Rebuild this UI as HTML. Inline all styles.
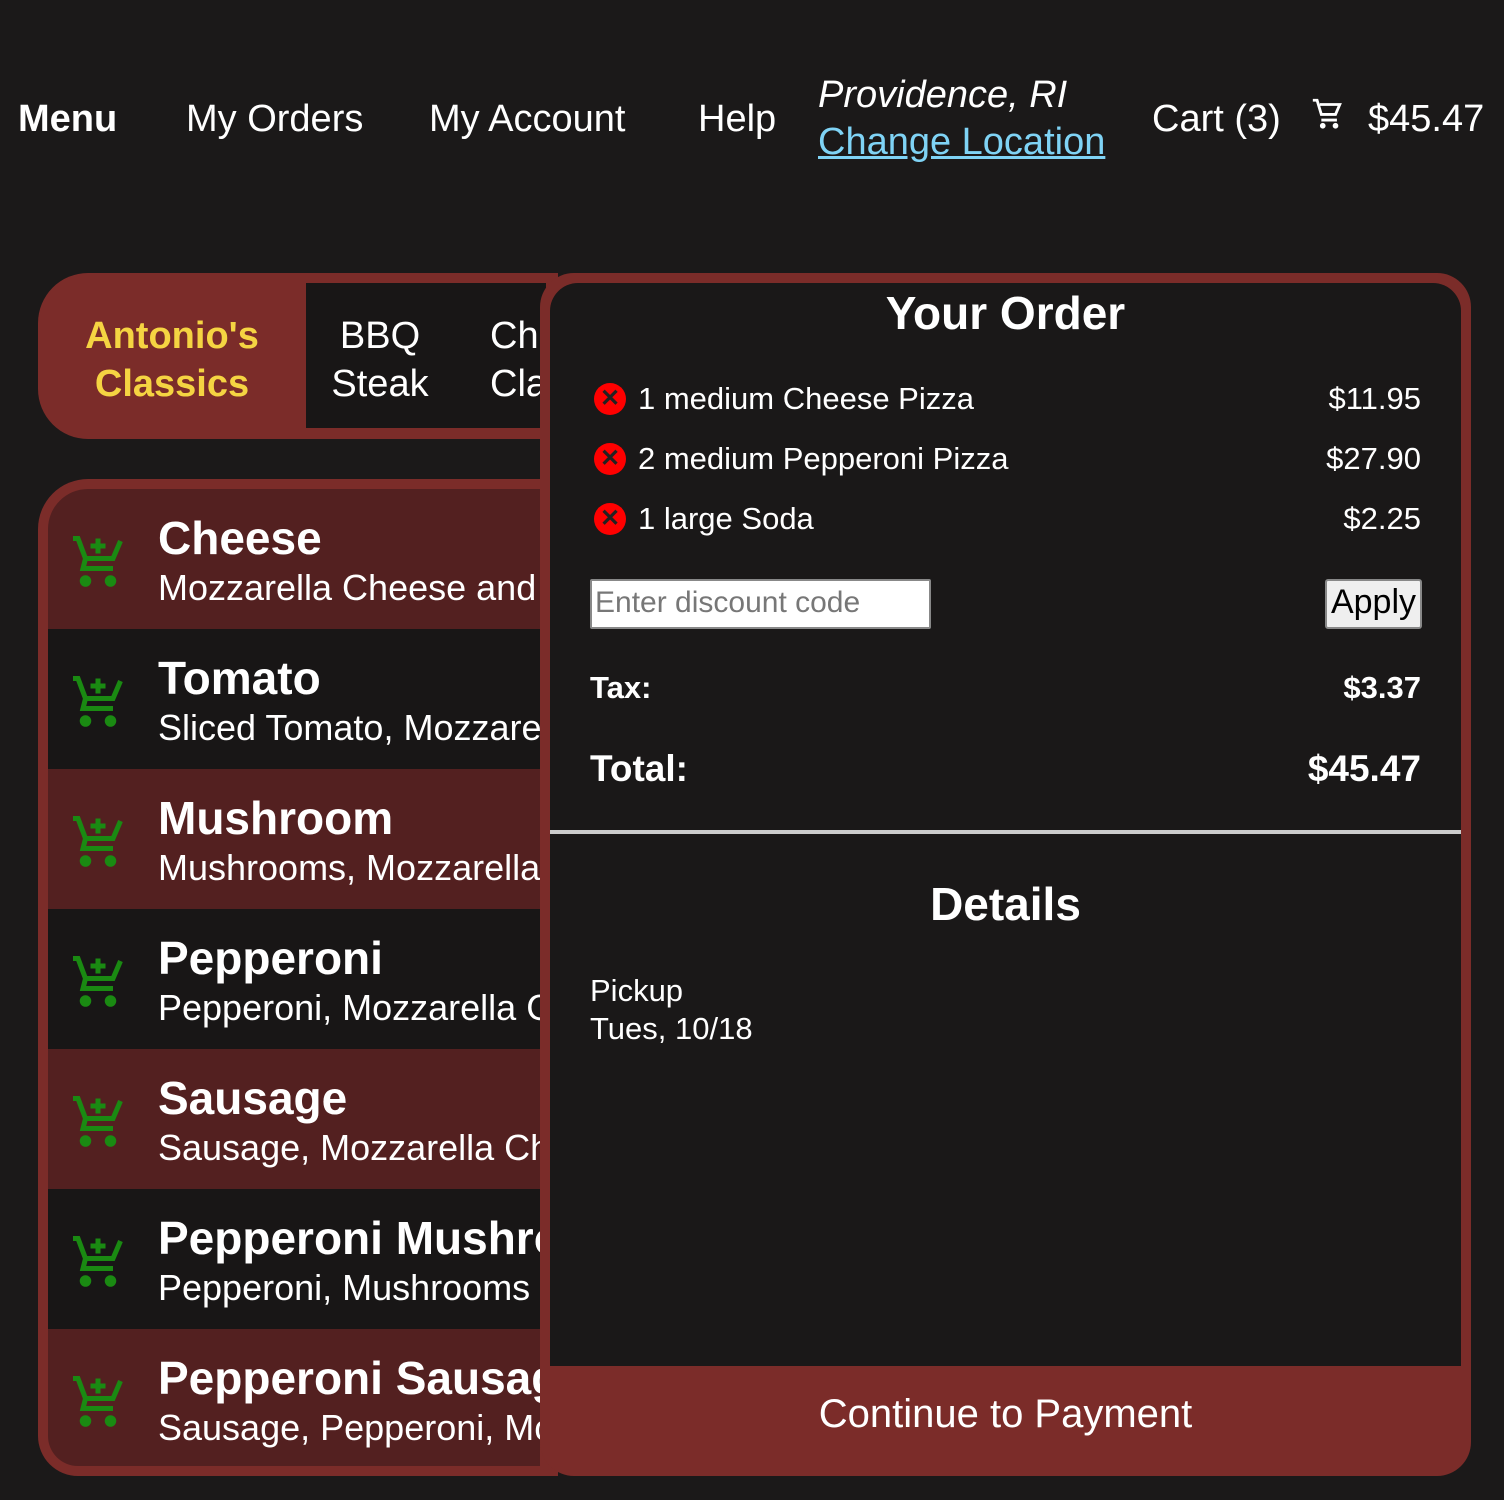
<!DOCTYPE html>
<html><head><meta charset="utf-8"><style>
*{margin:0;padding:0;box-sizing:border-box}
body{width:1504px;height:1500px;background:#1b1919;font-family:"Liberation Sans",sans-serif;color:#fff;position:relative;overflow:hidden}
.a{position:absolute;white-space:nowrap}
.nav{font-size:38px;top:98px}
.row{position:absolute;left:48px;width:492px;height:140px;overflow:hidden}
.row.r{background:#532020}
.row.d{background:#181616}
.row h3{position:absolute;left:110px;top:22px;font-size:46px;font-weight:bold;white-space:nowrap}
.row p{position:absolute;left:110px;top:78px;font-size:36px;white-space:nowrap}
.row svg{position:absolute;left:20px;top:42px}
.x{position:absolute;left:594px;width:32px;height:32px;border-radius:50%;background:#f00;color:#222;font-size:24px;line-height:32px;text-align:center;font-weight:bold}
.it{font-size:31px;left:638px}
.pr{font-size:31px;right:83px}
</style></head><body>
<div class="a nav" style="left:18px;font-weight:bold">Menu</div>
<div class="a nav" style="left:186px">My Orders</div>
<div class="a nav" style="left:429px">My Account</div>
<div class="a nav" style="left:698px">Help</div>
<div class="a" style="left:818px;top:74px;font-size:38px;font-style:italic">Providence, RI</div>
<div class="a" style="left:818px;top:121px;font-size:38px;color:#7fd3f5;text-decoration:underline">Change Location</div>
<div class="a nav" style="left:1152px">Cart (3)</div>
<svg class="a" style="left:1310px;top:96px" width="34" height="34" viewBox="0 0 24 24" fill="none" stroke="#fff" stroke-width="2"><path d="M2 3h3l3 10h10l3-7H7M8 17h11"/><circle cx="9" cy="21" r="1" fill="#fff"/><circle cx="18" cy="21" r="1" fill="#fff"/></svg>
<div class="a nav" style="left:1368px">$45.47</div>

<!-- tabs -->
<div class="a" style="left:38px;top:273px;width:520px;height:166px;background:#7b2c29;border-radius:50px 0 0 50px"></div>
<div class="a" style="left:306px;top:283px;width:240px;height:145px;background:#181616"></div>
<div class="a" style="left:38px;top:312px;width:268px;text-align:center;font-size:38px;font-weight:bold;color:#f5d442;line-height:48px">Antonio's<br>Classics</div>
<div class="a" style="left:330px;top:312px;width:100px;text-align:center;font-size:38px;line-height:48px">BBQ<br>Steak</div>
<div class="a" style="left:490px;top:312px;width:50px;overflow:hidden;font-size:38px;line-height:48px">Ch<br>Cla</div>

<!-- list -->
<div class="a" style="left:38px;top:479px;width:520px;height:997px;background:#7b2c29;border-radius:50px 0 0 40px"></div>
<div class="a" style="left:48px;top:489px;width:492px;height:977px;border-radius:40px 0 0 30px;overflow:hidden">
</div>
<div id="rows"></div>
<div class="row r" style="top:489px;border-top-left-radius:40px"><svg width="60" height="60" viewBox="0 0 24 24" fill="none" stroke="#1a8a12" stroke-width="2"><path d="M2 3h2l3 8h11l3-7M7 11l-1 4h12M12 3v6M9 6h6"/><circle cx="7" cy="20" r="1.3" fill="#1a8a12"/><circle cx="17" cy="20" r="1.3" fill="#1a8a12"/></svg><h3>Cheese</h3><p>Mozzarella Cheese and Tomato Sauce</p></div>
<div class="row d" style="top:629px"><svg width="60" height="60" viewBox="0 0 24 24" fill="none" stroke="#1a8a12" stroke-width="2"><path d="M2 3h2l3 8h11l3-7M7 11l-1 4h12M12 3v6M9 6h6"/><circle cx="7" cy="20" r="1.3" fill="#1a8a12"/><circle cx="17" cy="20" r="1.3" fill="#1a8a12"/></svg><h3>Tomato</h3><p>Sliced Tomato, Mozzarella</p></div>
<div class="row r" style="top:769px"><svg width="60" height="60" viewBox="0 0 24 24" fill="none" stroke="#1a8a12" stroke-width="2"><path d="M2 3h2l3 8h11l3-7M7 11l-1 4h12M12 3v6M9 6h6"/><circle cx="7" cy="20" r="1.3" fill="#1a8a12"/><circle cx="17" cy="20" r="1.3" fill="#1a8a12"/></svg><h3>Mushroom</h3><p>Mushrooms, Mozzarella</p></div>
<div class="row d" style="top:909px"><svg width="60" height="60" viewBox="0 0 24 24" fill="none" stroke="#1a8a12" stroke-width="2"><path d="M2 3h2l3 8h11l3-7M7 11l-1 4h12M12 3v6M9 6h6"/><circle cx="7" cy="20" r="1.3" fill="#1a8a12"/><circle cx="17" cy="20" r="1.3" fill="#1a8a12"/></svg><h3>Pepperoni</h3><p>Pepperoni, Mozzarella Cheese</p></div>
<div class="row r" style="top:1049px"><svg width="60" height="60" viewBox="0 0 24 24" fill="none" stroke="#1a8a12" stroke-width="2"><path d="M2 3h2l3 8h11l3-7M7 11l-1 4h12M12 3v6M9 6h6"/><circle cx="7" cy="20" r="1.3" fill="#1a8a12"/><circle cx="17" cy="20" r="1.3" fill="#1a8a12"/></svg><h3>Sausage</h3><p>Sausage, Mozzarella Cheese</p></div>
<div class="row d" style="top:1189px"><svg width="60" height="60" viewBox="0 0 24 24" fill="none" stroke="#1a8a12" stroke-width="2"><path d="M2 3h2l3 8h11l3-7M7 11l-1 4h12M12 3v6M9 6h6"/><circle cx="7" cy="20" r="1.3" fill="#1a8a12"/><circle cx="17" cy="20" r="1.3" fill="#1a8a12"/></svg><h3>Pepperoni Mushroom</h3><p>Pepperoni, Mushrooms</p></div>
<div class="row r" style="top:1329px;height:137px;border-bottom-left-radius:30px"><svg width="60" height="60" viewBox="0 0 24 24" fill="none" stroke="#1a8a12" stroke-width="2"><path d="M2 3h2l3 8h11l3-7M7 11l-1 4h12M12 3v6M9 6h6"/><circle cx="7" cy="20" r="1.3" fill="#1a8a12"/><circle cx="17" cy="20" r="1.3" fill="#1a8a12"/></svg><h3>Pepperoni Sausage</h3><p>Sausage, Pepperoni, Mozzarella</p></div>

<!-- order panel -->
<div class="a" style="left:540px;top:273px;width:931px;height:1203px;background:#7b2c29;border-radius:34px"></div>
<div class="a" style="left:550px;top:283px;width:911px;height:1083px;background:#1a1818;border-radius:28px 28px 0 0"></div>
<div class="a" style="left:550px;top:286px;width:911px;text-align:center;font-size:46px;font-weight:bold">Your Order</div>
<div class="x" style="top:383px">✕</div><div class="a it" style="top:381px">1 medium Cheese Pizza</div><div class="a pr" style="top:381px">$11.95</div>
<div class="x" style="top:443px">✕</div><div class="a it" style="top:441px">2 medium Pepperoni Pizza</div><div class="a pr" style="top:441px">$27.90</div>
<div class="x" style="top:503px">✕</div><div class="a it" style="top:501px">1 large Soda</div><div class="a pr" style="top:501px">$2.25</div>
<div class="a" style="left:590px;top:579px;width:341px;height:50px;background:#fff;border:2px solid #888;border-radius:2px;color:#777;font-size:30px;padding:5px 3px">Enter discount code</div>
<div class="a" style="left:1325px;top:579px;width:97px;height:50px;background:#efefef;border:2px solid #888;border-radius:3px;color:#000;font-size:34px;padding:2px 0;text-align:center">Apply</div>
<div class="a" style="left:590px;top:670px;font-size:31px;font-weight:bold">Tax:</div>
<div class="a pr" style="top:670px;font-weight:bold">$3.37</div>
<div class="a" style="left:590px;top:748px;font-size:37px;font-weight:bold">Total:</div>
<div class="a pr" style="top:748px;font-size:37px;font-weight:bold">$45.47</div>
<div class="a" style="left:550px;top:830px;width:911px;height:4px;background:#ccc"></div>
<div class="a" style="left:550px;top:877px;width:911px;text-align:center;font-size:46px;font-weight:bold">Details</div>
<div class="a" style="left:590px;top:972px;font-size:31px;line-height:38px">Pickup<br>Tues, 10/18</div>
<div class="a" style="left:550px;top:1392px;width:911px;text-align:center;font-size:40px">Continue to Payment</div>
</body></html>
